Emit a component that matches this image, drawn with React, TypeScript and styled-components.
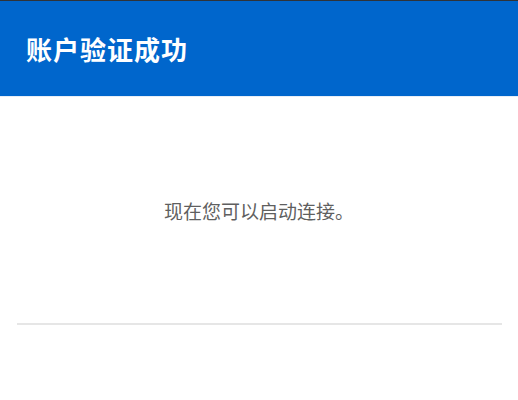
import React from 'react'
import styled, { createGlobalStyle } from 'styled-components'

const GlobalStyle = createGlobalStyle`
  html, body {
    margin: 0;
    padding: 0;
    background: #fff;
  }
  body {
    font-family: "Noto Sans CJK SC", "Liberation Sans", sans-serif;
  }
`

// 验证成功页
const App: React.FC = () => {
  return (
    <Page>
      <GlobalStyle />
      <Header>
        <Title>账户验证成功</Title>
      </Header>
      <Body>
        <Message>现在您可以启动连接。</Message>
      </Body>
      <Divider />
      <Footer />
    </Page>
  )
}

const Page = styled.div`
  width: 518px;
  height: 400px;
  display: flex;
  flex-direction: column;
  overflow: hidden;
`

const Header = styled.div`
  height: 95px;
  border-top: 1px solid #2f3338;
  border-bottom: 1px solid #e6eef7;
  background: #0066cc;
  display: flex;
  align-items: center;
  padding: 0 26px;
`

const Title = styled.div`
  color: #fff;
  font-size: 26px;
  font-weight: 700;
  letter-spacing: 1px;
`

const Body = styled.div`
  height: 226px;
  display: flex;
  align-items: center;
  justify-content: center;
`

const Message = styled.div`
  color: #5f5f5f;
  font-size: 19px;
`

const Divider = styled.div`
  height: 2px;
  margin: 0 16px 0 17px;
  background: #e6e6e6;
`

const Footer = styled.div`
  flex: 1;
`

export default App
